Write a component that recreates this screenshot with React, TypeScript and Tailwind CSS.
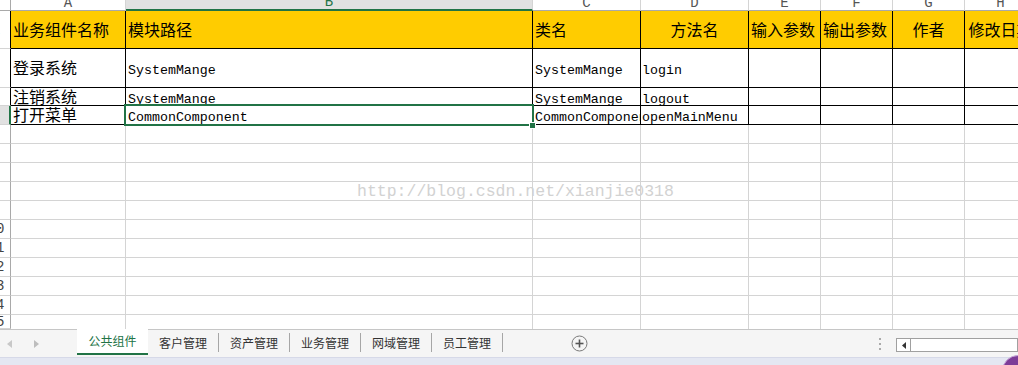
import React from 'react';

const CJK = "font-[family-name:'Noto_Sans_CJK_SC',sans-serif] text-[16px] leading-none";
const MONO = "font-[family-name:'Liberation_Mono',monospace] text-[13.3px] leading-none";
const LETTERS = ['A', 'B', 'C', 'D', 'E', 'F', 'G', 'H', 'I'];

type Row = { h: string; num: number; cells: { t: string; kind: 'cjk' | 'mono'; center?: boolean }[] };

const DATA: Row[] = [
  {
    h: 'h-[38px]',
    num: 1,
    cells: [
      { t: '业务组件名称', kind: 'cjk' },
      { t: '模块路径', kind: 'cjk' },
      { t: '类名', kind: 'cjk' },
      { t: '方法名', kind: 'cjk', center: true },
      { t: '输入参数', kind: 'cjk' },
      { t: '输出参数', kind: 'cjk' },
      { t: '作者', kind: 'cjk', center: true },
      { t: '修改日期', kind: 'cjk', center: true },
    ],
  },
  {
    h: 'h-[39px]',
    num: 2,
    cells: [
      { t: '登录系统', kind: 'cjk' },
      { t: 'SystemMange', kind: 'mono' },
      { t: 'SystemMange', kind: 'mono' },
      { t: 'login', kind: 'mono' },
      { t: '', kind: 'mono' },
      { t: '', kind: 'mono' },
      { t: '', kind: 'mono' },
      { t: '', kind: 'mono' },
    ],
  },
  {
    h: 'h-[18px]',
    num: 3,
    cells: [
      { t: '注销系统', kind: 'cjk' },
      { t: 'SystemMange', kind: 'mono' },
      { t: 'SystemMange', kind: 'mono' },
      { t: 'logout', kind: 'mono' },
      { t: '', kind: 'mono' },
      { t: '', kind: 'mono' },
      { t: '', kind: 'mono' },
      { t: '', kind: 'mono' },
    ],
  },
  {
    h: 'h-[19px]',
    num: 4,
    cells: [
      { t: '打开菜单', kind: 'cjk' },
      { t: 'CommonComponent', kind: 'mono' },
      { t: 'CommonComponent', kind: 'mono' },
      { t: 'openMainMenu', kind: 'mono' },
      { t: '', kind: 'mono' },
      { t: '', kind: 'mono' },
      { t: '', kind: 'mono' },
      { t: '', kind: 'mono' },
    ],
  },
];

const EMPTY_ROWS = [5, 6, 7, 8, 9, 10, 11, 12, 13, 14];

const TABS = ['公共组件', '客户管理', '资产管理', '业务管理', '网域管理', '员工管理'];

function RowHead({ num, h, selected, dark }: { num: number; h: string; selected?: boolean; dark?: boolean }) {
  return (
    <div
      className={`${h} relative overflow-hidden border-b border-[#d4d4d4] flex items-center ${
        selected ? 'bg-[#e1e1e1] border-r-2 border-r-[#217346]' : dark ? 'border-r border-r-black' : 'border-r border-r-[#a9a9a9]'
      }`}
    >
      <div className="shrink-0 w-[26px] ml-[-17px] text-center font-[family-name:'Liberation_Mono',monospace] text-[14px] leading-none text-[#444]">
        {num}
      </div>
    </div>
  );
}

export default function App() {
  return (
    <div className="relative w-[1018px] h-[365px] overflow-hidden bg-white">
      {/* sheet grid */}
      <div className="h-[329px] overflow-hidden">
        <div className="grid w-[1037px] grid-cols-[11px_115px_407px_108px_108px_72px_72px_72px_72px]">
          {/* column letters */}
          <div className="h-[11px] border-r border-b border-[#a9a9a9]" />
          {LETTERS.slice(0, 8).map((l) => (
            <div
              key={l}
              className={`h-[11px] overflow-hidden flex items-end justify-center border-r border-r-[#d4d4d4] font-[family-name:'Liberation_Mono',monospace] text-[14px] leading-none ${
                l === 'B'
                  ? 'bg-[#e1e1e1] text-[#217346] border-b-2 border-b-[#217346]'
                  : 'text-[#555] border-b border-b-[#a9a9a9]'
              }`}
            >
              {l}
            </div>
          ))}

          {/* table rows */}
          {DATA.map((row) => (
            <React.Fragment key={row.num}>
              <RowHead num={row.num} h={row.h} selected={row.num === 4} dark={row.num !== 4} />
              {row.cells.map((c, i) => (
                <div
                  key={i}
                  className={`${row.h} overflow-hidden whitespace-nowrap flex items-center border-r border-b border-black text-black ${
                    row.num === 1 ? 'bg-[#ffcc00]' : 'bg-white'
                  } ${c.center ? 'justify-center' : i === 3 ? 'pl-[1px]' : 'pl-[2px]'} ${
                    c.kind === 'cjk' ? CJK : MONO
                  }`}
                >
                  <span className={c.kind === 'mono' ? 'relative top-[3px]' : 'relative top-[-1px]'}>{c.t}</span>
                </div>
              ))}
            </React.Fragment>
          ))}

          {/* empty rows */}
          {EMPTY_ROWS.map((n) => (
            <React.Fragment key={n}>
              <RowHead num={n} h="h-[19px]" />
              {LETTERS.slice(0, 8).map((l) => (
                <div key={l} className="h-[19px] border-r border-b border-[#d4d4d4]" />
              ))}
            </React.Fragment>
          ))}
          <RowHead num={15} h="h-[14px]" />
          {LETTERS.slice(0, 8).map((l) => (
            <div key={l} className="h-[14px] border-r border-[#d4d4d4]" />
          ))}
        </div>
      </div>

      {/* selected cell B4 */}
      <div className="absolute left-[124px] top-[104px] w-[410px] h-[22px] border-2 border-[#217346] pointer-events-none" />
      <div className="absolute left-[529px] top-[122px] w-[7px] h-[7px] bg-[#217346] border border-white" />

      {/* watermark */}
      <div className="absolute left-[357px] top-[184px] font-[family-name:'Liberation_Mono',monospace] text-[16.5px] leading-none text-[#d2d2d2] whitespace-nowrap">
        http://blog.csdn.net/xianjie0318
      </div>

      {/* sheet tabs */}
      <div className="flex h-[28px] items-start border-t border-[#c6c6c6] bg-[#f5f5f5] font-[family-name:'Noto_Sans_CJK_SC',sans-serif] text-[12px]">
        <div className="w-[77px] h-full flex items-center">
          <svg width="6" height="8" viewBox="0 0 6 8" className="ml-[7px]">
            <polygon points="5,0 5,8 0,4" fill="#c8c8c8" />
          </svg>
          <svg width="6" height="8" viewBox="0 0 6 8" className="ml-[21px]">
            <polygon points="0,0 0,8 5,4" fill="#bdbdbd" />
          </svg>
        </div>
        {TABS.map((t, i) =>
          i === 0 ? (
            <div
              key={t}
              className="mt-[-1px] w-[71px] h-[26px] flex items-center justify-center bg-white text-[#217346] border-b-2 border-[#217346]"
            >
              {t}
            </div>
          ) : (
            <div key={t} className="w-[71px] h-[25px] flex items-center">
              <span className="flex-1 text-center text-[#333]">{t}</span>
              <span className="w-px h-[19px] bg-[#a6a6a6]" />
            </div>
          )
        )}
        <div className="ml-[68px] h-full flex items-center">
          <svg width="17" height="17" viewBox="0 0 17 17">
            <circle cx="8.5" cy="8.5" r="7.5" fill="none" stroke="#7a7a7a" strokeWidth="1" />
            <line x1="4.5" y1="8.5" x2="12.5" y2="8.5" stroke="#555" strokeWidth="1.6" />
            <line x1="8.5" y1="4.5" x2="8.5" y2="12.5" stroke="#555" strokeWidth="1.6" />
          </svg>
        </div>
        <div className="ml-[291px] h-full flex flex-col items-center justify-center gap-[3px]">
          <span className="w-[2px] h-[2px] bg-[#aaa]" />
          <span className="w-[2px] h-[2px] bg-[#aaa]" />
          <span className="w-[2px] h-[2px] bg-[#aaa]" />
        </div>
        <div className="ml-[15px] mt-[8px] flex-1 h-[14px] flex border border-[#a0a0a0] bg-white">
          <div className="w-[14px] h-full flex items-center justify-center border-r border-[#a0a0a0]">
            <svg width="4" height="7" viewBox="0 0 4 7">
              <polygon points="4,0 4,7 0,3.5" fill="#333" />
            </svg>
          </div>
        </div>
      </div>

      {/* taskbar strip */}
      <div className="h-[8px] bg-[#e4e7f2] border-t border-[#d6d9e8]" />
      <div className="absolute left-[1002px] top-[355px] w-[32px] h-[32px] rounded-full bg-[#7d3c98] border border-[#c5a3d6]" />
    </div>
  );
}
